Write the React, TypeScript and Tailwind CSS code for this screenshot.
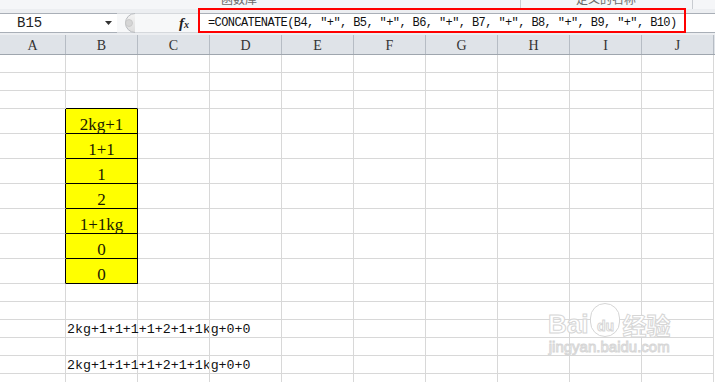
import React from "react";

const COLS = ["A", "B", "C", "D", "E", "F", "G", "H", "I", "J"];
const WIDTHS = [66, 72, 72, 72, 72, 72, 72, 72, 72, 72];

type Row = { h: number; yellow?: string; text?: string; topBlack?: boolean };

const rows: Row[] = [
  { h: 18 },
  { h: 18 },
  { h: 18, topBlack: true },
  { h: 25, yellow: "2kg+1" },
  { h: 25, yellow: "1+1" },
  { h: 25, yellow: "1" },
  { h: 25, yellow: "2" },
  { h: 25, yellow: "1+1kg" },
  { h: 25, yellow: "0" },
  { h: 25, yellow: "0" },
  { h: 18 },
  { h: 18 },
  { h: 18, text: "2kg+1+1+1+1+2+1+1kg+0+0" },
  { h: 18 },
  { h: 18, text: "2kg+1+1+1+1+2+1+1kg+0+0" },
  { h: 18 },
];

function Formula() {
  const parts: React.ReactNode[] = [];
  const s = "=CONCATENATE(B4,″+″,B5,″+″,B6,″+″,B7,″+″,B8,″+″,B9,″+″,B10)";
  let buf = "";
  let k = 0;
  const flush = () => {
    if (buf) {
      parts.push(<span key={k++}>{buf}</span>);
      buf = "";
    }
  };
  for (const ch of s) {
    if (ch === ",") {
      flush();
      parts.push(
        <span key={k++} className="inline-block w-[13.2px] text-left">
          ,
        </span>
      );
    } else buf += ch;
  }
  flush();
  return <>{parts}</>;
}

export default function App() {
  return (
    <div className="relative w-[715px] h-[382px] overflow-hidden bg-white">
      {/* ribbon bottom */}
      <div className="flex h-[9px] overflow-hidden bg-[#f5f6f8] text-[#6a6a6a] text-[12px] leading-[12px] [font-family:'Noto_Sans_CJK_SC',sans-serif]">
        <div className="w-[520px] pl-[221px]">
          <div className="-mt-[7px]">函数库</div>
        </div>
        <div className="w-px bg-[#c9ccd1]" />
        <div className="w-[171px] pl-[55px]">
          <div className="-mt-[7px]">定义的名称</div>
        </div>
        <div className="w-px bg-[#c9ccd1]" />
        <div className="flex-1" />
      </div>

      {/* formula bar */}
      <div className="bg-[#eceef1] pt-[4px] pb-[2px]">
        <div className="flex h-[20px]">
          <div className="relative flex w-[117px] items-center border-y border-[#a9afb7] bg-white">
            <span className="pl-[17px] text-[14px] text-[#222] [font-family:'Liberation_Mono',monospace]">
              B15
            </span>
            <svg className="absolute left-[105px] top-[7px]" width="7" height="4" viewBox="0 0 7 4">
              <path d="M0 0 L7 0 L3.5 4 Z" fill="#333" />
            </svg>
          </div>
          <div className="flex w-[81px] items-center bg-[#f7f8f9] border-y border-[#d5d8dc]">
            <svg className="ml-[3px]" width="16" height="20" viewBox="0 0 16 20">
              <defs>
                <linearGradient id="g1" x1="0" y1="0" x2="0" y2="1">
                  <stop offset="0" stopColor="#f4f4f4" />
                  <stop offset="1" stopColor="#dcdcdc" />
                </linearGradient>
              </defs>
              <path d="M15 0.5 A9.5 9.5 0 0 0 15 19.5" fill="url(#g1)" stroke="#b9bcc0" strokeWidth="1" />
              <circle cx="9" cy="10" r="3.5" fill="#d6d6d6" stroke="#c4c4c4" strokeWidth="0.8" />
            </svg>
            <span className="ml-[43px] flex items-baseline text-[#222] [font-family:'Liberation_Serif',serif] italic font-bold">
              <span className="text-[15px] leading-none">f</span>
              <span className="text-[10px] leading-none">x</span>
            </span>
          </div>
          <div className="relative flex flex-1 items-center border-y border-[#a9afb7] bg-white">
            <span className="pl-[10px] whitespace-nowrap text-[12px] tracking-[-0.6px] text-[#111] [font-family:'Liberation_Mono',monospace]">
              <Formula />
            </span>
            <div className="absolute left-0 top-[-6px] h-[25px] w-[488px] border-2 border-[#ff0000]" />
          </div>
        </div>
      </div>

      {/* column header */}
      <div className="flex h-[20px] border-b border-[#9fa6ae] bg-[#dfe3e8]">
        {COLS.map((c, i) => (
          <div
            key={c}
            style={{ width: WIDTHS[i] }}
            className="flex shrink-0 items-center justify-center border-r border-[#b6bcc4] pt-[1px] text-[14px] text-[#333] [font-family:'Liberation_Serif',serif]"
          >
            {c}
          </div>
        ))}
      </div>

      {/* grid */}
      <div>
        {rows.map((r, ri) => (
          <div key={ri} className="flex" style={{ height: r.h }}>
            {COLS.map((c, ci) => {
              const isB = ci === 1;
              const isA = ci === 0;
              let cls = "relative shrink-0 border-r border-b flex items-end ";
              if (r.yellow && isB) cls += "bg-[#ffff00] border-r-black border-b-black justify-center items-center ";
              else if (r.yellow && isA) cls += "border-r-black border-b-[#d8d8d8] ";
              else if (r.topBlack && isB) cls += "border-r-[#d8d8d8] border-b-black ";
              else cls += "border-[#d8d8d8] ";
              return (
                <div key={c} style={{ width: WIDTHS[ci] }} className={cls}>
                  {r.yellow && isB && (
                    <span className="pt-[3px] text-[17px] leading-none text-[#1a1a00] [font-family:'Liberation_Serif',serif]">
                      {r.yellow}
                    </span>
                  )}
                  {r.text && isB && (
                    <span className="absolute left-[1px] bottom-[1px] whitespace-nowrap text-[13.3px] leading-none text-[#111] [font-family:'Liberation_Mono',monospace]">
                      {r.text}
                    </span>
                  )}
                </div>
              );
            })}
          </div>
        ))}
      </div>

      {/* watermark */}
      <div className="pointer-events-none absolute left-[548px] top-[303px] flex flex-col items-center text-white [-webkit-text-stroke:1px_#d6d6d6]">
        <div className="flex items-end gap-[2px]">
          <span className="text-[26px] font-bold leading-none [font-family:'Liberation_Sans',sans-serif]">Bai</span>
          <span className="flex h-[34px] w-[30px] items-end justify-center rounded-full border border-[#d6d6d6] bg-white pb-[3px] text-[14px] font-bold leading-none [font-family:'Liberation_Sans',sans-serif]">
            du
          </span>
          <span className="text-[24px] font-bold leading-none [font-family:'Noto_Sans_CJK_SC',sans-serif]">经验</span>
        </div>
        <span className="mt-[2px] text-[15px] leading-none [font-family:'Liberation_Sans',sans-serif]">
          jingyan.baidu.com
        </span>
      </div>
    </div>
  );
}
